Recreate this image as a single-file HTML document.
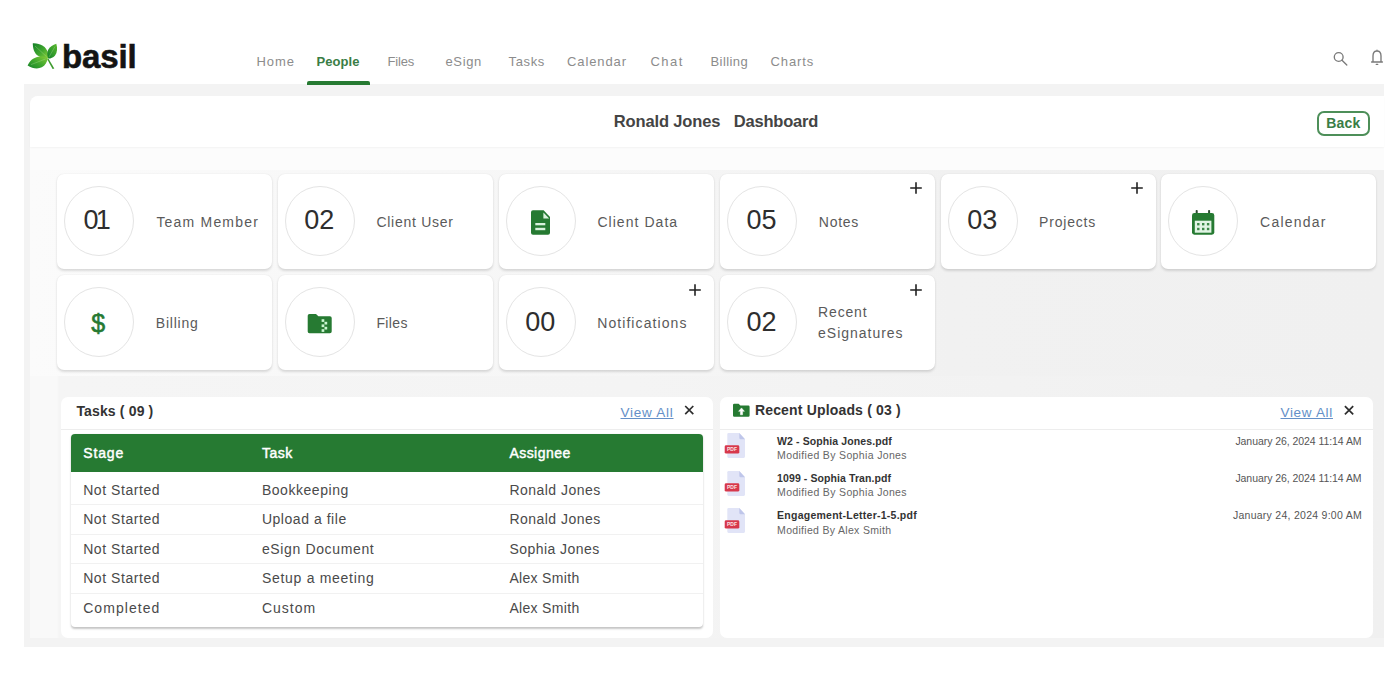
<!DOCTYPE html>
<html lang="en">
<head>
<meta charset="utf-8">
<title>Ronald Jones Dashboard</title>
<style>
*{box-sizing:border-box;margin:0;padding:0}
html,body{width:1399px;height:675px;overflow:hidden;background:#fff}
body{font-family:"Liberation Sans",sans-serif;color:#333;position:relative}
.abs{position:absolute}
.t{position:absolute;white-space:pre;line-height:20px;font-family:"Liberation Sans",sans-serif}
#bg{left:24px;top:84px;width:1360px;height:563px;background:#f3f3f3}
#bg2{left:30px;top:96px;width:1354px;height:75px;background:#fcfcfc;border-radius:8px 0 0 0}
#bg3{left:30px;top:170px;width:1354px;height:206px;background:linear-gradient(to right,#fbfbfb 0,#f8f8f8 270px,#f5f5f5 670px,#f1f1f1 920px,#f0f0f0 100%)}
#bg4{left:30px;top:376px;width:1354px;height:262px;background:linear-gradient(to right,#f9f9f9 0,#f9f9f9 27px,#f5f5f5 29px,#f4f4f4 600px,#f0f0f0 100%)}
#titlebar{left:30px;top:96px;width:1354px;height:51px;background:#fff;border-radius:8px 0 0 0;box-shadow:0 1px 2px rgba(0,0,0,.04)}
#navline{left:307px;top:80.5px;width:62.5px;height:4px;background:#267a32;border-radius:2px 2px 0 0}
#back{left:1317px;top:110.5px;width:53px;height:25.5px;border:2px solid #4d8f59;border-radius:7px;background:#fff}
.card{height:95px;background:#fff;border-radius:7px;box-shadow:0 1.5px 2.5px rgba(0,0,0,.13),0 0 1.5px rgba(0,0,0,.05)}
.circ{width:70px;height:70px;border-radius:50%;border:1.5px solid #e4e4e4;background:#fff}
.panel{top:397px;height:241px;background:#fff;border-radius:7px}
.hr{height:1px;background:#ededed}
.hr2{height:1px;background:#f1f1f1}

</style>
</head>
<body>
<div id="bg" class="abs"></div>
<div id="bg2" class="abs"></div>
<div id="bg3" class="abs"></div>
<div id="bg4" class="abs"></div>
<div id="titlebar" class="abs"></div>
<div id="navline" class="abs"></div>
<div id="back" class="abs"></div>
<div class="abs card" style="left:57px;top:174px;width:215px"></div>
<div class="abs circ" style="left:63.5px;top:185.6px"></div>
<div class="abs card" style="left:278px;top:174px;width:215px"></div>
<div class="abs circ" style="left:284.5px;top:185.6px"></div>
<div class="abs card" style="left:499px;top:174px;width:215px"></div>
<div class="abs circ" style="left:505.5px;top:185.6px"></div>
<div class="abs card" style="left:720px;top:174px;width:215px"></div>
<div class="abs circ" style="left:726.5px;top:185.6px"></div>
<div class="abs card" style="left:941px;top:174px;width:215px"></div>
<div class="abs circ" style="left:947.5px;top:185.6px"></div>
<div class="abs card" style="left:1161px;top:174px;width:215px"></div>
<div class="abs circ" style="left:1167.5px;top:185.6px"></div>
<div class="abs card" style="left:57px;top:275.3px;width:215px"></div>
<div class="abs circ" style="left:63.5px;top:286.9px"></div>
<div class="abs card" style="left:278px;top:275.3px;width:215px"></div>
<div class="abs circ" style="left:284.5px;top:286.9px"></div>
<div class="abs card" style="left:499px;top:275.3px;width:215px"></div>
<div class="abs circ" style="left:505.5px;top:286.9px"></div>
<div class="abs card" style="left:720px;top:275.3px;width:215px"></div>
<div class="abs circ" style="left:726.5px;top:286.9px"></div>
<svg class="abs" style="left:909.3px;top:181px" width="14" height="14" viewBox="0 0 14 14"><path d="M7 1.2v11.6M1.2 7h11.6" stroke="#222" stroke-width="1.6" fill="none"/></svg>
<svg class="abs" style="left:1130.3px;top:181px" width="14" height="14" viewBox="0 0 14 14"><path d="M7 1.2v11.6M1.2 7h11.6" stroke="#222" stroke-width="1.6" fill="none"/></svg>
<svg class="abs" style="left:688.4px;top:283.2px" width="14" height="14" viewBox="0 0 14 14"><path d="M7 1.2v11.6M1.2 7h11.6" stroke="#222" stroke-width="1.6" fill="none"/></svg>
<svg class="abs" style="left:909.3px;top:283.2px" width="14" height="14" viewBox="0 0 14 14"><path d="M7 1.2v11.6M1.2 7h11.6" stroke="#222" stroke-width="1.6" fill="none"/></svg>
<div class="abs panel" style="left:61px;width:651.5px"></div>
<div class="abs panel" style="left:720px;width:652.5px"></div>
<div class="abs hr" style="left:61px;width:651.5px;top:429px"></div>
<div class="abs hr" style="left:720px;width:652.5px;top:429px"></div>
<div class="abs" style="left:70.5px;top:433.5px;width:632px;height:193px;background:#fff;border-radius:4px;box-shadow:0 1.5px 2px rgba(0,0,0,.22),0 0 1px rgba(0,0,0,.08)"></div>
<div class="abs" style="left:70.5px;top:433.5px;width:632px;height:38.5px;background:#267a32;border-radius:4px 4px 0 0"></div>
<div class="abs hr2" style="left:70.5px;width:632px;top:504px"></div>
<div class="abs hr2" style="left:70.5px;width:632px;top:533.5px"></div>
<div class="abs hr2" style="left:70.5px;width:632px;top:563px"></div>
<div class="abs hr2" style="left:70.5px;width:632px;top:592.5px"></div>

<svg class="abs" style="left:24px;top:38px" width="40" height="36" viewBox="24 38 40 36">
<defs>
<linearGradient id="lg1" x1="0" y1="0" x2="1" y2="1"><stop offset="0" stop-color="#16802a"/><stop offset=".55" stop-color="#3fa62e"/><stop offset="1" stop-color="#8bcf3a"/></linearGradient>
<linearGradient id="lg2" x1="1" y1="0" x2="0" y2="1"><stop offset="0" stop-color="#5cb82f"/><stop offset=".6" stop-color="#2f9a2c"/><stop offset="1" stop-color="#137a28"/></linearGradient>
<linearGradient id="lg3" x1="0" y1="1" x2="1" y2="0"><stop offset="0" stop-color="#15822a"/><stop offset=".5" stop-color="#41a82e"/><stop offset="1" stop-color="#86cc38"/></linearGradient>
</defs>
<path d="M48.4 58.6 L54.3 68.6 L52.6 69 L47.2 59.2Z" fill="#3d9a2e"/>
<path d="M32.8 43.2 C39.8 42.8 46.4 46.4 47.8 52.4 C48.2 54.6 48.2 56.6 48 58.4 C45 58.4 41 57.8 38 55.8 C33.8 52.8 32.8 48 32.8 43.2Z" fill="url(#lg1)"/>
<path d="M56.3 43.8 C57.8 48.4 57.2 52.8 54.9 55.7 C53.2 57.6 50.8 58.4 48.4 58.6 C46.8 55.6 46.9 52.2 48.3 49.6 C50 46.6 53 44.8 56.3 43.8Z" fill="url(#lg2)"/>
<path d="M27.6 65.5 C29.4 61.2 33.2 57.8 38.2 56.8 C41.6 56.2 44.8 56.8 47.8 58.4 C47.2 62 45.2 65.2 41.8 67.3 C37.6 69.4 32.2 68.4 27.6 65.5Z" fill="url(#lg3)"/>
<path d="M35 46 L46.5 56.6 M55 46.5 L49 57 M31 64.6 L45.5 59" stroke="#c8eeb4" stroke-width=".5" opacity=".55" fill="none"/>
</svg>
<svg class="abs" style="left:1330px;top:48px" width="54" height="20" viewBox="1330 48 54 20" fill="none" stroke="#7a7a7a" stroke-width="1.35" stroke-linecap="round" stroke-linejoin="round">
<circle cx="1338.7" cy="57" r="4.4"/><path d="M1342 60.3 L1346.8 65"/>
<path d="M1371.6 62 H1382.4 M1373 62 V56 C1373 52.6 1374.8 51 1377 51 C1379.2 51 1381 52.6 1381 56 V62 M1377 51 V50.2 M1376.3 64.4 H1377.7"/>
</svg>
<!-- file icon -->
<svg class="abs" style="left:530px;top:209px" width="22" height="27" viewBox="530 209 22 27">
<path d="M533 210.3 H543.6 L550 217 V232.7 A2 2 0 0 1 548 234.7 H533 A2 2 0 0 1 531 232.7 V212.3 A2 2 0 0 1 533 210.3Z" fill="#267a32"/>
<path d="M543.4 212.6 V218.6 H549.2Z" fill="#d9f2dd"/>
<rect x="535.3" y="223" width="10" height="2.3" fill="#d9f2dd"/><rect x="535.3" y="227.8" width="10" height="2.4" fill="#d9f2dd"/>
</svg>
<!-- calendar icon -->
<svg class="abs" style="left:1190px;top:208px" width="27" height="29" viewBox="1190 208 27 29">
<rect x="1195.7" y="210" width="2" height="4.5" rx=".8" fill="#2e4a32"/><rect x="1208.1" y="210" width="2" height="4.5" rx=".8" fill="#2e4a32"/>
<rect x="1192" y="213" width="22.3" height="21.7" rx="2.4" fill="#267a32"/>
<rect x="1194.8" y="220.7" width="16.6" height="12" fill="#e1f4e4"/>
<g fill="#3c8848"><rect x="1197.1" y="223" width="2.4" height="2.4"/><rect x="1202" y="223" width="2.4" height="2.4"/><rect x="1206.9" y="223" width="2.4" height="2.4"/><rect x="1197.1" y="227.8" width="2.4" height="2.4"/><rect x="1202" y="227.8" width="2.4" height="2.4"/><rect x="1206.9" y="227.8" width="2.4" height="2.4"/></g>
</svg>
<!-- folder zip -->
<svg class="abs" style="left:306px;top:312px" width="28" height="24" viewBox="306 312 28 24">
<path d="M309.5 314 H316 L318.4 316.3 H329.9 A1.8 1.8 0 0 1 331.7 318.1 V331.5 A1.8 1.8 0 0 1 329.9 333.3 H309.5 A1.8 1.8 0 0 1 307.7 331.5 V315.8 A1.8 1.8 0 0 1 309.5 314Z" fill="#267a32"/>
<g fill="#c9f5d0"><rect x="321.6" y="319.2" width="2.7" height="2.7"/><rect x="324.5" y="321.8" width="2.7" height="2.7"/><rect x="321.6" y="324.4" width="2.7" height="2.7"/><rect x="324.5" y="326.8" width="2.7" height="2.7"/><rect x="321.6" y="329.2" width="2.7" height="2.7"/></g>
</svg>
<!-- upload folder -->
<svg class="abs" style="left:732px;top:402px" width="19" height="16" viewBox="732 402 19 16">
<path d="M734.2 403.8 H738.6 L740.4 405.5 H748.4 A1.2 1.2 0 0 1 749.6 406.7 V415.5 A1.2 1.2 0 0 1 748.4 416.7 H734.2 A1.2 1.2 0 0 1 733 415.5 V405 A1.2 1.2 0 0 1 734.2 403.8Z" fill="#267a32"/>
<path d="M741.5 407.9 L744.4 411.3 H742.6 V414.8 H740.4 V411.3 H738.6Z" fill="#fff" stroke="#fff" stroke-width=".5" stroke-linejoin="round"/>
</svg>
<svg class="abs" style="left:723px;top:432.3px" width="24" height="27" viewBox="723 432.3 24 27">
<path d="M728.6 433.3 H739.3 L745 439.5 V456.9 A1.3 1.3 0 0 1 743.7 458.2 H728.6 A1.3 1.3 0 0 1 727.3 456.9 V434.6 A1.3 1.3 0 0 1 728.6 433.3Z" fill="#e1e4f7"/>
<path d="M739.3 433.3 L745 439.5 H740.4 A1.1 1.1 0 0 1 739.3 438.4Z" fill="#bfc6ea"/>
<rect x="724.7" y="445.6" width="14.6" height="8.3" rx="1.4" fill="#d7384c"/>
<text x="732" y="451.7" font-family="Liberation Sans, sans-serif" font-size="5" font-weight="bold" fill="#fbe4e6" text-anchor="middle">PDF</text>
</svg>
<svg class="abs" style="left:723px;top:469.7px" width="24" height="27" viewBox="723 469.7 24 27">
<path d="M728.6 470.7 H739.3 L745 476.9 V494.3 A1.3 1.3 0 0 1 743.7 495.6 H728.6 A1.3 1.3 0 0 1 727.3 494.3 V472.0 A1.3 1.3 0 0 1 728.6 470.7Z" fill="#e1e4f7"/>
<path d="M739.3 470.7 L745 476.9 H740.4 A1.1 1.1 0 0 1 739.3 475.8Z" fill="#bfc6ea"/>
<rect x="724.7" y="483.0" width="14.6" height="8.3" rx="1.4" fill="#d7384c"/>
<text x="732" y="489.1" font-family="Liberation Sans, sans-serif" font-size="5" font-weight="bold" fill="#fbe4e6" text-anchor="middle">PDF</text>
</svg>
<svg class="abs" style="left:723px;top:507.1px" width="24" height="27" viewBox="723 507.1 24 27">
<path d="M728.6 508.1 H739.3 L745 514.3 V531.7 A1.3 1.3 0 0 1 743.7 533.0 H728.6 A1.3 1.3 0 0 1 727.3 531.7 V509.4 A1.3 1.3 0 0 1 728.6 508.1Z" fill="#e1e4f7"/>
<path d="M739.3 508.1 L745 514.3 H740.4 A1.1 1.1 0 0 1 739.3 513.2Z" fill="#bfc6ea"/>
<rect x="724.7" y="520.4" width="14.6" height="8.3" rx="1.4" fill="#d7384c"/>
<text x="732" y="526.5" font-family="Liberation Sans, sans-serif" font-size="5" font-weight="bold" fill="#fbe4e6" text-anchor="middle">PDF</text>
</svg>
<svg class="abs" style="left:682px;top:403px" width="14" height="14" viewBox="682 403 14 14"><path d="M685.2 406 L693.3 414.1 M693.3 406 L685.2 414.1" stroke="#2e2e2e" stroke-width="1.7" fill="none"/></svg>
<svg class="abs" style="left:1342px;top:403px" width="14" height="14" viewBox="1342 403 14 14"><path d="M1344.9 406.1 L1353.2 414.4 M1353.2 406.1 L1344.9 414.4" stroke="#2e2e2e" stroke-width="1.7" fill="none"/></svg>

<span class="t" style="left:62.0px;top:46.6px;font-size:33px;font-weight:bold;color:#141414;letter-spacing:-0.11px;-webkit-text-stroke:0.6px #141414;">basil</span>
<span class="t" style="left:256.5px;top:51.7px;font-size:13px;font-weight:normal;color:#8c8c8c;letter-spacing:0.95px;">Home</span>
<span class="t" style="left:316.5px;top:51.7px;font-size:13px;font-weight:bold;color:#3a7d45;letter-spacing:0.08px;">People</span>
<span class="t" style="left:387.5px;top:51.7px;font-size:13px;font-weight:normal;color:#8c8c8c;letter-spacing:-0.17px;">Files</span>
<span class="t" style="left:445.5px;top:51.7px;font-size:13px;font-weight:normal;color:#8c8c8c;letter-spacing:0.63px;">eSign</span>
<span class="t" style="left:508.5px;top:51.7px;font-size:13px;font-weight:normal;color:#8c8c8c;letter-spacing:0.64px;">Tasks</span>
<span class="t" style="left:567.0px;top:51.7px;font-size:13px;font-weight:normal;color:#8c8c8c;letter-spacing:0.89px;">Calendar</span>
<span class="t" style="left:650.5px;top:51.7px;font-size:13px;font-weight:normal;color:#8c8c8c;letter-spacing:1.44px;">Chat</span>
<span class="t" style="left:710.5px;top:51.7px;font-size:13px;font-weight:normal;color:#8c8c8c;letter-spacing:0.43px;">Billing</span>
<span class="t" style="left:770.5px;top:51.7px;font-size:13px;font-weight:normal;color:#8c8c8c;letter-spacing:0.90px;">Charts</span>
<span class="t" style="left:613.8px;top:111.3px;font-size:16.5px;font-weight:bold;color:#444;letter-spacing:-0.15px;">Ronald Jones</span>
<span class="t" style="left:733.8px;top:111.3px;font-size:16.5px;font-weight:bold;color:#444;letter-spacing:-0.21px;">Dashboard</span>
<span class="t" style="left:1326.2px;top:112.9px;font-size:14px;font-weight:bold;color:#3a7d45;letter-spacing:0.19px;">Back</span>
<span class="t" style="left:156.4px;top:211.5px;font-size:14px;font-weight:normal;color:#5a5a5a;letter-spacing:1.20px;">Team Member</span>
<span class="t" style="left:376.4px;top:211.5px;font-size:14px;font-weight:normal;color:#5a5a5a;letter-spacing:0.73px;">Client User</span>
<span class="t" style="left:597.4px;top:211.5px;font-size:14px;font-weight:normal;color:#5a5a5a;letter-spacing:1.05px;">Client Data</span>
<span class="t" style="left:818.8px;top:211.5px;font-size:14px;font-weight:normal;color:#5a5a5a;letter-spacing:0.72px;">Notes</span>
<span class="t" style="left:1039.1px;top:211.5px;font-size:14px;font-weight:normal;color:#5a5a5a;letter-spacing:0.79px;">Projects</span>
<span class="t" style="left:1260.1px;top:211.5px;font-size:14px;font-weight:normal;color:#5a5a5a;letter-spacing:1.22px;">Calendar</span>
<span class="t" style="left:155.8px;top:312.8px;font-size:14px;font-weight:normal;color:#5a5a5a;letter-spacing:0.78px;">Billing</span>
<span class="t" style="left:376.4px;top:312.8px;font-size:14px;font-weight:normal;color:#5a5a5a;letter-spacing:0.39px;">Files</span>
<span class="t" style="left:597.2px;top:312.8px;font-size:14px;font-weight:normal;color:#5a5a5a;letter-spacing:1.08px;">Notifications</span>
<span class="t" style="left:818.1px;top:302.3px;font-size:14px;font-weight:normal;color:#5a5a5a;letter-spacing:0.82px;">Recent</span>
<span class="t" style="left:818.1px;top:322.5px;font-size:14px;font-weight:normal;color:#5a5a5a;letter-spacing:0.98px;">eSignatures</span>
<span class="t" style="left:83.6px;top:210.4px;font-size:27px;font-weight:normal;color:#2e2e2e;letter-spacing:-2.83px;">01</span>
<span class="t" style="left:304.2px;top:210.4px;font-size:27px;font-weight:normal;color:#2e2e2e;letter-spacing:-0.03px;">02</span>
<span class="t" style="left:746.5px;top:210.4px;font-size:27px;font-weight:normal;color:#2e2e2e;letter-spacing:-0.03px;">05</span>
<span class="t" style="left:967.2px;top:210.4px;font-size:27px;font-weight:normal;color:#2e2e2e;letter-spacing:-0.03px;">03</span>
<span class="t" style="left:525.2px;top:311.7px;font-size:27px;font-weight:normal;color:#2e2e2e;letter-spacing:-0.03px;">00</span>
<span class="t" style="left:746.5px;top:311.7px;font-size:27px;font-weight:normal;color:#2e2e2e;letter-spacing:-0.03px;">02</span>
<span class="t" style="left:91.2px;top:312.9px;font-size:25px;font-weight:normal;color:#267a32;letter-spacing:-0.31px;-webkit-text-stroke:0.6px #267a32;">$</span>
<span class="t" style="left:76.4px;top:400.6px;font-size:14px;font-weight:bold;color:#333;letter-spacing:0.15px;">Tasks ( 09 )</span>
<span class="t" style="left:620.5px;top:403.3px;font-size:13.5px;font-weight:normal;color:#6490c8;letter-spacing:0.75px;text-decoration:underline;text-underline-offset:1px;">View All</span>
<span class="t" style="left:83.2px;top:443.1px;font-size:14px;font-weight:normal;color:#fff;letter-spacing:0.87px;-webkit-text-stroke:0.45px #fff;">Stage</span>
<span class="t" style="left:261.9px;top:443.1px;font-size:14px;font-weight:normal;color:#fff;letter-spacing:0.51px;-webkit-text-stroke:0.45px #fff;">Task</span>
<span class="t" style="left:509.4px;top:443.1px;font-size:14px;font-weight:normal;color:#fff;letter-spacing:0.46px;-webkit-text-stroke:0.45px #fff;">Assignee</span>
<span class="t" style="left:83.2px;top:479.6px;font-size:14px;font-weight:normal;color:#4a4a4a;letter-spacing:0.55px;">Not Started</span>
<span class="t" style="left:261.9px;top:479.6px;font-size:14px;font-weight:normal;color:#4a4a4a;letter-spacing:0.54px;">Bookkeeping</span>
<span class="t" style="left:509.4px;top:479.6px;font-size:14px;font-weight:normal;color:#4a4a4a;letter-spacing:0.47px;">Ronald Jones</span>
<span class="t" style="left:83.2px;top:509.1px;font-size:14px;font-weight:normal;color:#4a4a4a;letter-spacing:0.55px;">Not Started</span>
<span class="t" style="left:261.9px;top:509.1px;font-size:14px;font-weight:normal;color:#4a4a4a;letter-spacing:0.54px;">Upload a file</span>
<span class="t" style="left:509.4px;top:509.1px;font-size:14px;font-weight:normal;color:#4a4a4a;letter-spacing:0.47px;">Ronald Jones</span>
<span class="t" style="left:83.2px;top:538.6px;font-size:14px;font-weight:normal;color:#4a4a4a;letter-spacing:0.55px;">Not Started</span>
<span class="t" style="left:261.9px;top:538.6px;font-size:14px;font-weight:normal;color:#4a4a4a;letter-spacing:0.64px;">eSign Document</span>
<span class="t" style="left:509.4px;top:538.6px;font-size:14px;font-weight:normal;color:#4a4a4a;letter-spacing:0.45px;">Sophia Jones</span>
<span class="t" style="left:83.2px;top:568.1px;font-size:14px;font-weight:normal;color:#4a4a4a;letter-spacing:0.55px;">Not Started</span>
<span class="t" style="left:261.9px;top:568.1px;font-size:14px;font-weight:normal;color:#4a4a4a;letter-spacing:0.71px;">Setup a meeting</span>
<span class="t" style="left:509.4px;top:568.1px;font-size:14px;font-weight:normal;color:#4a4a4a;letter-spacing:0.32px;">Alex Smith</span>
<span class="t" style="left:83.2px;top:597.6px;font-size:14px;font-weight:normal;color:#4a4a4a;letter-spacing:1.05px;">Completed</span>
<span class="t" style="left:261.9px;top:597.6px;font-size:14px;font-weight:normal;color:#4a4a4a;letter-spacing:1.02px;">Custom</span>
<span class="t" style="left:509.4px;top:597.6px;font-size:14px;font-weight:normal;color:#4a4a4a;letter-spacing:0.32px;">Alex Smith</span>
<span class="t" style="left:754.9px;top:400.3px;font-size:14px;font-weight:bold;color:#333;letter-spacing:0.17px;">Recent Uploads ( 03 )</span>
<span class="t" style="left:1280.5px;top:403.3px;font-size:13.5px;font-weight:normal;color:#6490c8;letter-spacing:0.68px;text-decoration:underline;text-underline-offset:1px;">View All</span>
<span class="t" style="left:777.1px;top:430.6px;font-size:10.5px;font-weight:bold;color:#333;letter-spacing:0.10px;">W2 - Sophia Jones.pdf</span>
<span class="t" style="left:777.1px;top:445.1px;font-size:10.5px;font-weight:normal;color:#666;letter-spacing:0.35px;">Modified By Sophia Jones</span>
<span class="t" style="left:1235.4px;top:430.6px;font-size:10.5px;font-weight:normal;color:#555;letter-spacing:-0.06px;">January 26, 2024 11:14 AM</span>
<span class="t" style="left:777.1px;top:467.9px;font-size:10.5px;font-weight:bold;color:#333;letter-spacing:0.09px;">1099 - Sophia Tran.pdf</span>
<span class="t" style="left:777.1px;top:482.4px;font-size:10.5px;font-weight:normal;color:#666;letter-spacing:0.35px;">Modified By Sophia Jones</span>
<span class="t" style="left:1235.4px;top:467.9px;font-size:10.5px;font-weight:normal;color:#555;letter-spacing:-0.06px;">January 26, 2024 11:14 AM</span>
<span class="t" style="left:777.1px;top:505.2px;font-size:10.5px;font-weight:bold;color:#333;letter-spacing:0.25px;">Engagement-Letter-1-5.pdf</span>
<span class="t" style="left:777.1px;top:519.7px;font-size:10.5px;font-weight:normal;color:#666;letter-spacing:0.31px;">Modified By Alex Smith</span>
<span class="t" style="left:1232.9px;top:505.2px;font-size:10.5px;font-weight:normal;color:#555;letter-spacing:0.27px;">January 24, 2024 9:00 AM</span>
</body>
</html>
